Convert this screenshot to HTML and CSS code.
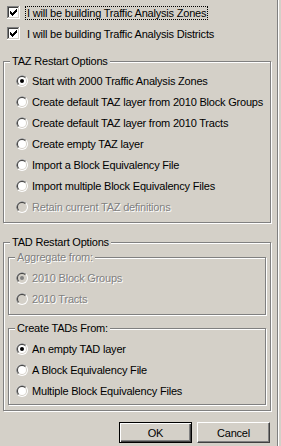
FILE: index.html
```html
<!DOCTYPE html>
<html>
<head>
<meta charset="utf-8">
<link rel="stylesheet" href="styles.css">
</head>
<body>
<div class="panel">
  <div class="checks">
    <div class="check-row">
      <svg class="cb" width="13" height="13" viewBox="0 0 13 13" shape-rendering="crispEdges">
        <rect x="0" y="0" width="13" height="13" fill="#fff"/>
        <rect x="0" y="0" width="12" height="1" fill="#808080"/>
        <rect x="0" y="0" width="1" height="12" fill="#808080"/>
        <rect x="1" y="1" width="10" height="1" fill="#404040"/>
        <rect x="1" y="1" width="1" height="10" fill="#404040"/>
        <rect x="1" y="11" width="11" height="1" fill="#d4d0c8"/>
        <rect x="11" y="1" width="1" height="11" fill="#d4d0c8"/>
        <path d="M3 5h1v3h-1zM4 6h1v3h-1zM5 7h1v3h-1zM6 6h1v3h-1zM7 5h1v3h-1zM8 4h1v3h-1zM9 3h1v3h-1z" fill="#000"/>
      </svg>
      <span class="lbl focus">I will be building Traffic Analysis Zones</span>
    </div>
    <div class="check-row">
      <svg class="cb" width="13" height="13" viewBox="0 0 13 13" shape-rendering="crispEdges">
        <rect x="0" y="0" width="13" height="13" fill="#fff"/>
        <rect x="0" y="0" width="12" height="1" fill="#808080"/>
        <rect x="0" y="0" width="1" height="12" fill="#808080"/>
        <rect x="1" y="1" width="10" height="1" fill="#404040"/>
        <rect x="1" y="1" width="1" height="10" fill="#404040"/>
        <rect x="1" y="11" width="11" height="1" fill="#d4d0c8"/>
        <rect x="11" y="1" width="1" height="11" fill="#d4d0c8"/>
        <path d="M3 5h1v3h-1zM4 6h1v3h-1zM5 7h1v3h-1zM6 6h1v3h-1zM7 5h1v3h-1zM8 4h1v3h-1zM9 3h1v3h-1z" fill="#000"/>
      </svg>
      <span class="lbl">I will be building Traffic Analysis Districts</span>
    </div>
  </div>

  <div class="group taz">
    <span class="group-title">TAZ Restart Options</span>
    <div class="radio-row">
      <svg class="rb" width="12" height="12" viewBox="0 0 12 12"><circle cx="6" cy="6" r="6" fill="#fff"/><path d="M1.76 10.24A6 6 0 0 1 10.24 1.76Z" fill="#808080"/><circle cx="6" cy="6" r="5" fill="#d4d0c8"/><path d="M2.46 9.54A5 5 0 0 1 9.54 2.46Z" fill="#404040"/><circle cx="6" cy="6" r="4" fill="#fff"/><circle cx="6" cy="6" r="2" fill="#000"/></svg>
      <span>Start with 2000 Traffic Analysis Zones</span>
    </div>
    <div class="radio-row">
      <svg class="rb" width="12" height="12" viewBox="0 0 12 12"><circle cx="6" cy="6" r="6" fill="#fff"/><path d="M1.76 10.24A6 6 0 0 1 10.24 1.76Z" fill="#808080"/><circle cx="6" cy="6" r="5" fill="#d4d0c8"/><path d="M2.46 9.54A5 5 0 0 1 9.54 2.46Z" fill="#404040"/><circle cx="6" cy="6" r="4" fill="#fff"/></svg>
      <span>Create default TAZ layer from 2010 Block Groups</span>
    </div>
    <div class="radio-row">
      <svg class="rb" width="12" height="12" viewBox="0 0 12 12"><circle cx="6" cy="6" r="6" fill="#fff"/><path d="M1.76 10.24A6 6 0 0 1 10.24 1.76Z" fill="#808080"/><circle cx="6" cy="6" r="5" fill="#d4d0c8"/><path d="M2.46 9.54A5 5 0 0 1 9.54 2.46Z" fill="#404040"/><circle cx="6" cy="6" r="4" fill="#fff"/></svg>
      <span>Create default TAZ layer from 2010 Tracts</span>
    </div>
    <div class="radio-row">
      <svg class="rb" width="12" height="12" viewBox="0 0 12 12"><circle cx="6" cy="6" r="6" fill="#fff"/><path d="M1.76 10.24A6 6 0 0 1 10.24 1.76Z" fill="#808080"/><circle cx="6" cy="6" r="5" fill="#d4d0c8"/><path d="M2.46 9.54A5 5 0 0 1 9.54 2.46Z" fill="#404040"/><circle cx="6" cy="6" r="4" fill="#fff"/></svg>
      <span>Create empty TAZ layer</span>
    </div>
    <div class="radio-row">
      <svg class="rb" width="12" height="12" viewBox="0 0 12 12"><circle cx="6" cy="6" r="6" fill="#fff"/><path d="M1.76 10.24A6 6 0 0 1 10.24 1.76Z" fill="#808080"/><circle cx="6" cy="6" r="5" fill="#d4d0c8"/><path d="M2.46 9.54A5 5 0 0 1 9.54 2.46Z" fill="#404040"/><circle cx="6" cy="6" r="4" fill="#fff"/></svg>
      <span>Import a Block Equivalency File</span>
    </div>
    <div class="radio-row">
      <svg class="rb" width="12" height="12" viewBox="0 0 12 12"><circle cx="6" cy="6" r="6" fill="#fff"/><path d="M1.76 10.24A6 6 0 0 1 10.24 1.76Z" fill="#808080"/><circle cx="6" cy="6" r="5" fill="#d4d0c8"/><path d="M2.46 9.54A5 5 0 0 1 9.54 2.46Z" fill="#404040"/><circle cx="6" cy="6" r="4" fill="#fff"/></svg>
      <span>Import multiple Block Equivalency Files</span>
    </div>
    <div class="radio-row disabled">
      <svg class="rb" width="12" height="12" viewBox="0 0 12 12"><circle cx="6" cy="6" r="6" fill="#fff"/><path d="M1.76 10.24A6 6 0 0 1 10.24 1.76Z" fill="#808080"/><circle cx="6" cy="6" r="5" fill="#d4d0c8"/><path d="M2.46 9.54A5 5 0 0 1 9.54 2.46Z" fill="#404040"/><circle cx="6" cy="6" r="4" fill="#d4d0c8"/></svg>
      <span>Retain current TAZ definitions</span>
    </div>
  </div>

  <div class="group tad">
    <span class="group-title">TAD Restart Options</span>
    <div class="group sub agg">
      <span class="group-title disabled-text">Aggregate from:</span>
      <div class="radio-row disabled">
        <svg class="rb" width="12" height="12" viewBox="0 0 12 12"><circle cx="6" cy="6" r="6" fill="#fff"/><path d="M1.76 10.24A6 6 0 0 1 10.24 1.76Z" fill="#808080"/><circle cx="6" cy="6" r="5" fill="#d4d0c8"/><path d="M2.46 9.54A5 5 0 0 1 9.54 2.46Z" fill="#404040"/><circle cx="6" cy="6" r="4" fill="#d4d0c8"/><circle cx="6" cy="6" r="2" fill="#808080"/></svg>
        <span>2010 Block Groups</span>
      </div>
      <div class="radio-row disabled">
        <svg class="rb" width="12" height="12" viewBox="0 0 12 12"><circle cx="6" cy="6" r="6" fill="#fff"/><path d="M1.76 10.24A6 6 0 0 1 10.24 1.76Z" fill="#808080"/><circle cx="6" cy="6" r="5" fill="#d4d0c8"/><path d="M2.46 9.54A5 5 0 0 1 9.54 2.46Z" fill="#404040"/><circle cx="6" cy="6" r="4" fill="#d4d0c8"/></svg>
        <span>2010 Tracts</span>
      </div>
    </div>
    <div class="group sub create">
      <span class="group-title">Create TADs From:</span>
      <div class="radio-row">
        <svg class="rb" width="12" height="12" viewBox="0 0 12 12"><circle cx="6" cy="6" r="6" fill="#fff"/><path d="M1.76 10.24A6 6 0 0 1 10.24 1.76Z" fill="#808080"/><circle cx="6" cy="6" r="5" fill="#d4d0c8"/><path d="M2.46 9.54A5 5 0 0 1 9.54 2.46Z" fill="#404040"/><circle cx="6" cy="6" r="4" fill="#fff"/><circle cx="6" cy="6" r="2" fill="#000"/></svg>
        <span>An empty TAD layer</span>
      </div>
      <div class="radio-row">
        <svg class="rb" width="12" height="12" viewBox="0 0 12 12"><circle cx="6" cy="6" r="6" fill="#fff"/><path d="M1.76 10.24A6 6 0 0 1 10.24 1.76Z" fill="#808080"/><circle cx="6" cy="6" r="5" fill="#d4d0c8"/><path d="M2.46 9.54A5 5 0 0 1 9.54 2.46Z" fill="#404040"/><circle cx="6" cy="6" r="4" fill="#fff"/></svg>
        <span>A Block Equivalency File</span>
      </div>
      <div class="radio-row">
        <svg class="rb" width="12" height="12" viewBox="0 0 12 12"><circle cx="6" cy="6" r="6" fill="#fff"/><path d="M1.76 10.24A6 6 0 0 1 10.24 1.76Z" fill="#808080"/><circle cx="6" cy="6" r="5" fill="#d4d0c8"/><path d="M2.46 9.54A5 5 0 0 1 9.54 2.46Z" fill="#404040"/><circle cx="6" cy="6" r="4" fill="#fff"/></svg>
        <span>Multiple Block Equivalency Files</span>
      </div>
    </div>
  </div>

  <div class="buttons">
    <button class="btn default">OK</button>
    <button class="btn">Cancel</button>
  </div>
</div>
</body>
</html>
```

FILE: styles.css
```css
html, body {
  margin: 0;
  padding: 0;
  background: #d4d0c8;
}
body {
  font-family: "Liberation Sans", Arial, sans-serif;
  font-size: 11px;
  letter-spacing: -0.2px;
  color: #000;
}
.panel {
  width: 278px;
  height: 446px;
  box-sizing: border-box;
  border-right: 1px solid #808080;
  box-shadow: 1px 0 0 #fff;
  padding-top: 2px;
}
.check-row {
  display: flex;
  align-items: center;
  height: 21px;
  padding-left: 7px;
}
.cb {
  display: block;
  flex: none;
  margin-right: 5px;
}
.lbl {
  padding: 0 1px;
  border: 1px dotted transparent;
  line-height: 12px;
}
.lbl.focus {
  border-color: #000;
}
.group {
  position: relative;
  box-sizing: border-box;
  border: 1px solid #808080;
  box-shadow: inset 1px 1px 0 #fff, 1px 1px 0 #fff;
}
.group-title {
  position: absolute;
  top: -7px;
  left: 6px;
  padding: 0 2px;
  line-height: 13px;
  background: #d4d0c8;
  white-space: nowrap;
}
.taz {
  margin: 17px 0 0 3px;
  width: 268px;
  padding: 8px 0 5px 12px;
}
.tad {
  margin: 19px 0 0 3px;
  width: 268px;
  padding: 14px 4px 5px 4px;
}
.sub {
  width: 258px;
  padding-left: 7px;
}
.agg {
  padding-top: 9px;
  padding-bottom: 5px;
}
.create {
  margin-top: 13px;
  padding-top: 9px;
  padding-bottom: 3px;
}
.radio-row {
  display: flex;
  align-items: center;
  height: 21px;
}
.rb {
  display: block;
  flex: none;
  margin-right: 4px;
}
.disabled span,
.disabled-text {
  color: #808080;
  text-shadow: 1px 1px 0 #fff;
}
.buttons {
  display: flex;
  justify-content: flex-end;
  gap: 5px;
  margin-top: 11px;
  padding-right: 7px;
}
.btn {
  width: 73px;
  height: 21px;
  box-sizing: border-box;
  padding: 0;
  margin: 0;
  font-family: "Liberation Sans", Arial, sans-serif;
  font-size: 11px;
  letter-spacing: -0.2px;
  color: #000;
  background: #d4d0c8;
  border: 1px solid;
  border-color: #fff #404040 #404040 #fff;
  box-shadow: inset -1px -1px 0 #808080;
  border-radius: 0;
}
.btn.default {
  border-color: #000;
  box-shadow: inset 1px 1px 0 #fff, inset -1px -1px 0 #404040, inset -2px -2px 0 #808080;
}
```
